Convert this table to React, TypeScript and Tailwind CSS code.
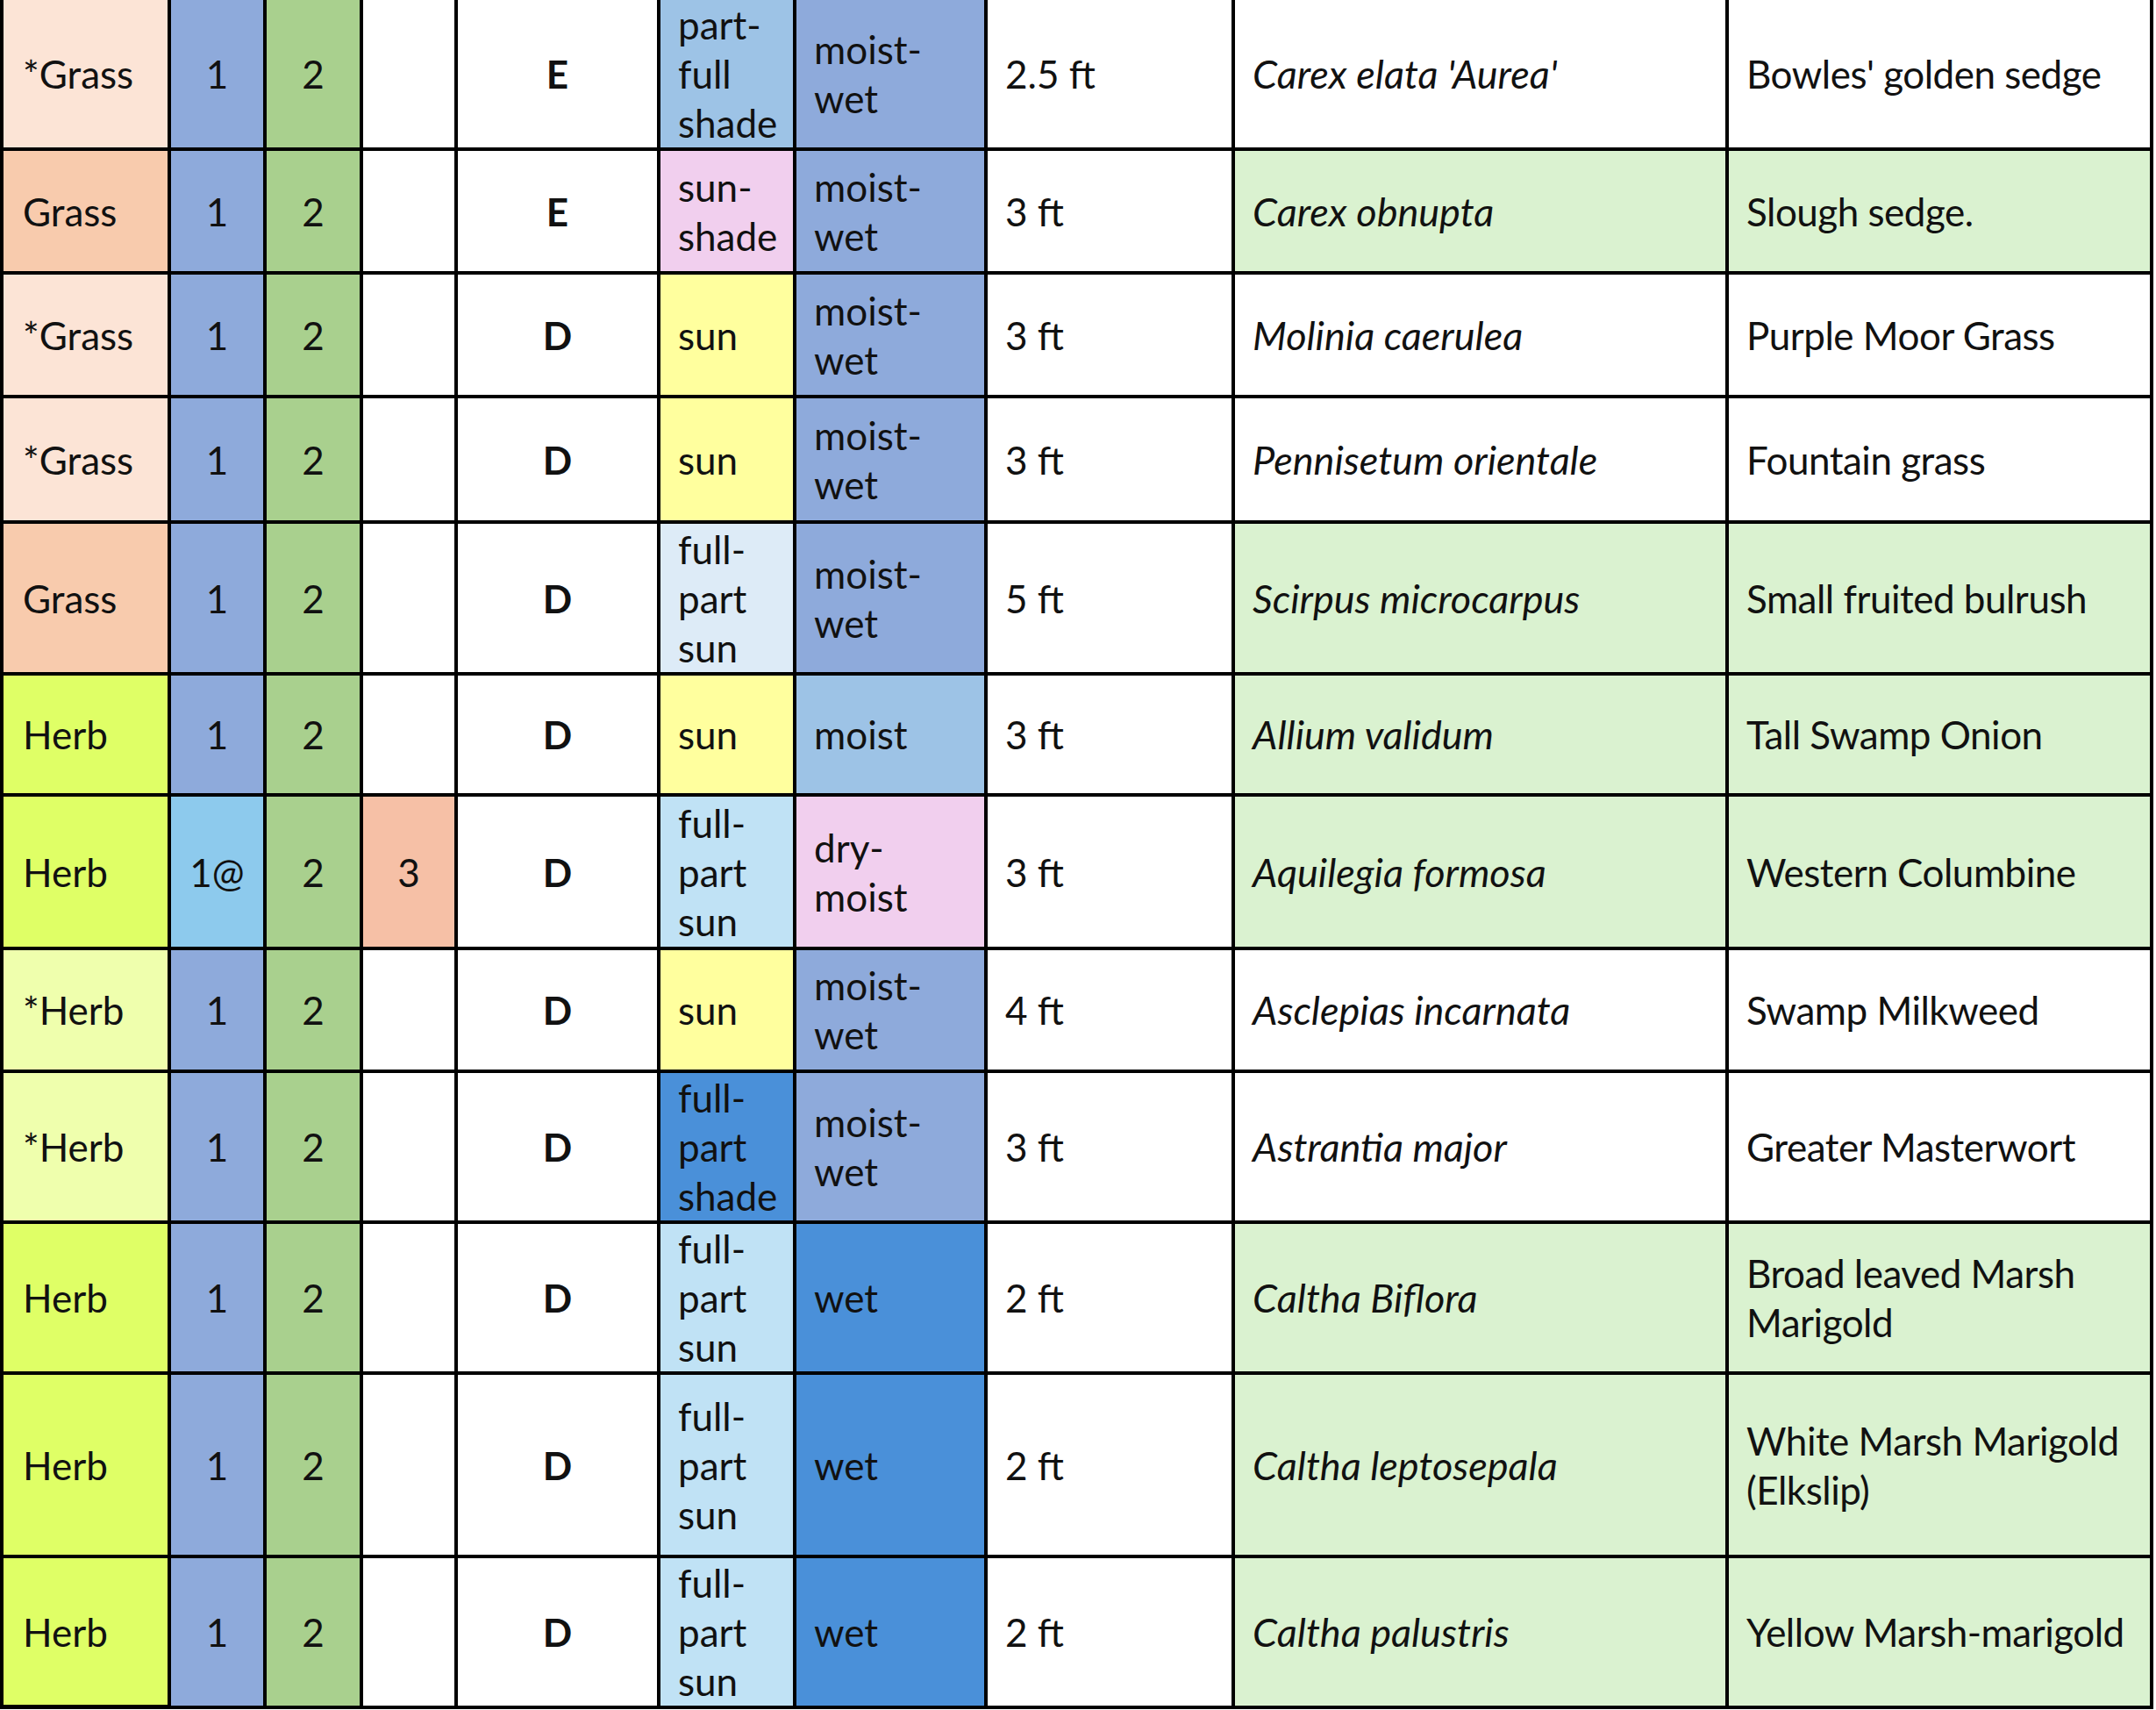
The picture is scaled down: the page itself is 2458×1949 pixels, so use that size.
type Row = {
  h: string;
  kind: string;
  kindBg: string;
  a: string;
  aBg: string;
  b: string;
  c: string;
  cBg: string;
  ed: string;
  light: string;
  lightBg: string;
  water: string;
  waterBg: string;
  size: string;
  latin: string;
  common: string;
  nameBg: string;
};

const peachLight = "bg-[#fce4d6]";
const peach = "bg-[#f8cbad]";
const herb = "bg-[#dfff66]";
const herbLight = "bg-[#efffad]";
const blue = "bg-[#8eaadb]";
const sky = "bg-[#9dc3e6]";
const pink = "bg-[#f1cfee]";
const sun = "bg-[#ffff9e]";
const pale = "bg-[#ddebf7]";
const paleBlue = "bg-[#c0e2f5]";
const deep = "bg-[#4a90d9]";
const green = "bg-[#daf2d0]";
const white = "bg-white";

const rows: Row[] = [
  { h: "h-[168px]", kind: "*Grass", kindBg: peachLight, a: "1", aBg: blue, b: "2", c: "", cBg: white, ed: "E", light: "part-\nfull\nshade", lightBg: sky, water: "moist-\nwet", waterBg: blue, size: "2.5 ft", latin: "Carex elata 'Aurea'", common: "Bowles' golden sedge", nameBg: white },
  { h: "h-[137px]", kind: "Grass", kindBg: peach, a: "1", aBg: blue, b: "2", c: "", cBg: white, ed: "E", light: "sun-\nshade", lightBg: pink, water: "moist-\nwet", waterBg: blue, size: "3 ft", latin: "Carex obnupta", common: "Slough sedge.", nameBg: green },
  { h: "h-[137px]", kind: "*Grass", kindBg: peachLight, a: "1", aBg: blue, b: "2", c: "", cBg: white, ed: "D", light: "sun", lightBg: sun, water: "moist-\nwet", waterBg: blue, size: "3 ft", latin: "Molinia caerulea", common: "Purple Moor Grass", nameBg: white },
  { h: "h-[139px]", kind: "*Grass", kindBg: peachLight, a: "1", aBg: blue, b: "2", c: "", cBg: white, ed: "D", light: "sun", lightBg: sun, water: "moist-\nwet", waterBg: blue, size: "3 ft", latin: "Pennisetum orientale", common: "Fountain grass", nameBg: white },
  { h: "h-[169px]", kind: "Grass", kindBg: peach, a: "1", aBg: blue, b: "2", c: "", cBg: white, ed: "D", light: "full-\npart\nsun", lightBg: pale, water: "moist-\nwet", waterBg: blue, size: "5 ft", latin: "Scirpus microcarpus", common: "Small fruited bulrush", nameBg: green },
  { h: "h-[134px]", kind: "Herb", kindBg: herb, a: "1", aBg: blue, b: "2", c: "", cBg: white, ed: "D", light: "sun", lightBg: sun, water: "moist", waterBg: sky, size: "3 ft", latin: "Allium validum", common: "Tall Swamp Onion", nameBg: green },
  { h: "h-[171px]", kind: "Herb", kindBg: herb, a: "1@", aBg: "bg-[#8dcaed]", b: "2", c: "3", cBg: "bg-[#f6c0a6]", ed: "D", light: "full-\npart\nsun", lightBg: paleBlue, water: "dry-\nmoist", waterBg: pink, size: "3 ft", latin: "Aquilegia formosa", common: "Western Columbine", nameBg: green },
  { h: "h-[136px]", kind: "*Herb", kindBg: herbLight, a: "1", aBg: blue, b: "2", c: "", cBg: white, ed: "D", light: "sun", lightBg: sun, water: "moist-\nwet", waterBg: blue, size: "4 ft", latin: "Asclepias incarnata", common: "Swamp Milkweed", nameBg: white },
  { h: "h-[168px]", kind: "*Herb", kindBg: herbLight, a: "1", aBg: blue, b: "2", c: "", cBg: white, ed: "D", light: "full-\npart\nshade", lightBg: deep, water: "moist-\nwet", waterBg: blue, size: "3 ft", latin: "Astrantia major", common: "Greater Masterwort", nameBg: white },
  { h: "h-[168px]", kind: "Herb", kindBg: herb, a: "1", aBg: blue, b: "2", c: "", cBg: white, ed: "D", light: "full-\npart\nsun", lightBg: paleBlue, water: "wet", waterBg: deep, size: "2 ft", latin: "Caltha Biflora", common: "Broad leaved Marsh\nMarigold", nameBg: green },
  { h: "h-[205px]", kind: "Herb", kindBg: herb, a: "1", aBg: blue, b: "2", c: "", cBg: white, ed: "D", light: "full-\npart\nsun", lightBg: paleBlue, water: "wet", waterBg: deep, size: "2 ft", latin: "Caltha leptosepala", common: "White Marsh Marigold\n(Elkslip)", nameBg: green },
  { h: "h-[167px]", kind: "Herb", kindBg: herb, a: "1", aBg: blue, b: "2", c: "", cBg: white, ed: "D", light: "full-\npart\nsun", lightBg: paleBlue, water: "wet", waterBg: deep, size: "2 ft", latin: "Caltha palustris", common: "Yellow Marsh-marigold", nameBg: green },
];

function Lines({ text }: { text: string }) {
  const parts = text.split("\n");
  return (
    <span>
      {parts.map((p, i) => (
        <span key={i}>
          {p}
          {i < parts.length - 1 && <br />}
        </span>
      ))}
    </span>
  );
}

function Cell({ bg, center, children, className }: { bg: string; center?: boolean; children?: React.ReactNode; className?: string }) {
  return (
    <div className={`${bg} flex items-center ${center ? "justify-center" : "px-[20px]"} ${className ?? ""}`}>
      {children}
    </div>
  );
}

export default function App() {
  return (
    <div className="min-h-screen w-[2458px] bg-white font-['Lato','Noto_Sans',sans-serif] text-[44px] leading-[56px] text-[#111]">
      <div className="w-[2455px] bg-black px-[4px] pb-[4px] grid grid-cols-[187px_105px_106px_104px_227px_151px_214px_278px_559px_480px] gap-[4px]">
        {rows.map((r, i) => (
          <div key={i} className="contents">
            <Cell bg={r.kindBg} className={`${r.h} pl-[22px]`}>{r.kind}</Cell>
            <Cell bg={r.aBg} center>{r.a}</Cell>
            <Cell bg="bg-[#a9d08e]" center>{r.b}</Cell>
            <Cell bg={r.cBg} center>{r.c}</Cell>
            <Cell bg={white} center className="font-bold">{r.ed}</Cell>
            <Cell bg={r.lightBg}><Lines text={r.light} /></Cell>
            <Cell bg={r.waterBg}><Lines text={r.water} /></Cell>
            <Cell bg={white}>{r.size}</Cell>
            <Cell bg={r.nameBg} className="italic text-[45px]">{r.latin}</Cell>
            <Cell bg={r.nameBg} className="whitespace-nowrap tracking-[-0.5px] pr-0">
              <Lines text={r.common} />
            </Cell>
          </div>
        ))}
      </div>
    </div>
  );
}
